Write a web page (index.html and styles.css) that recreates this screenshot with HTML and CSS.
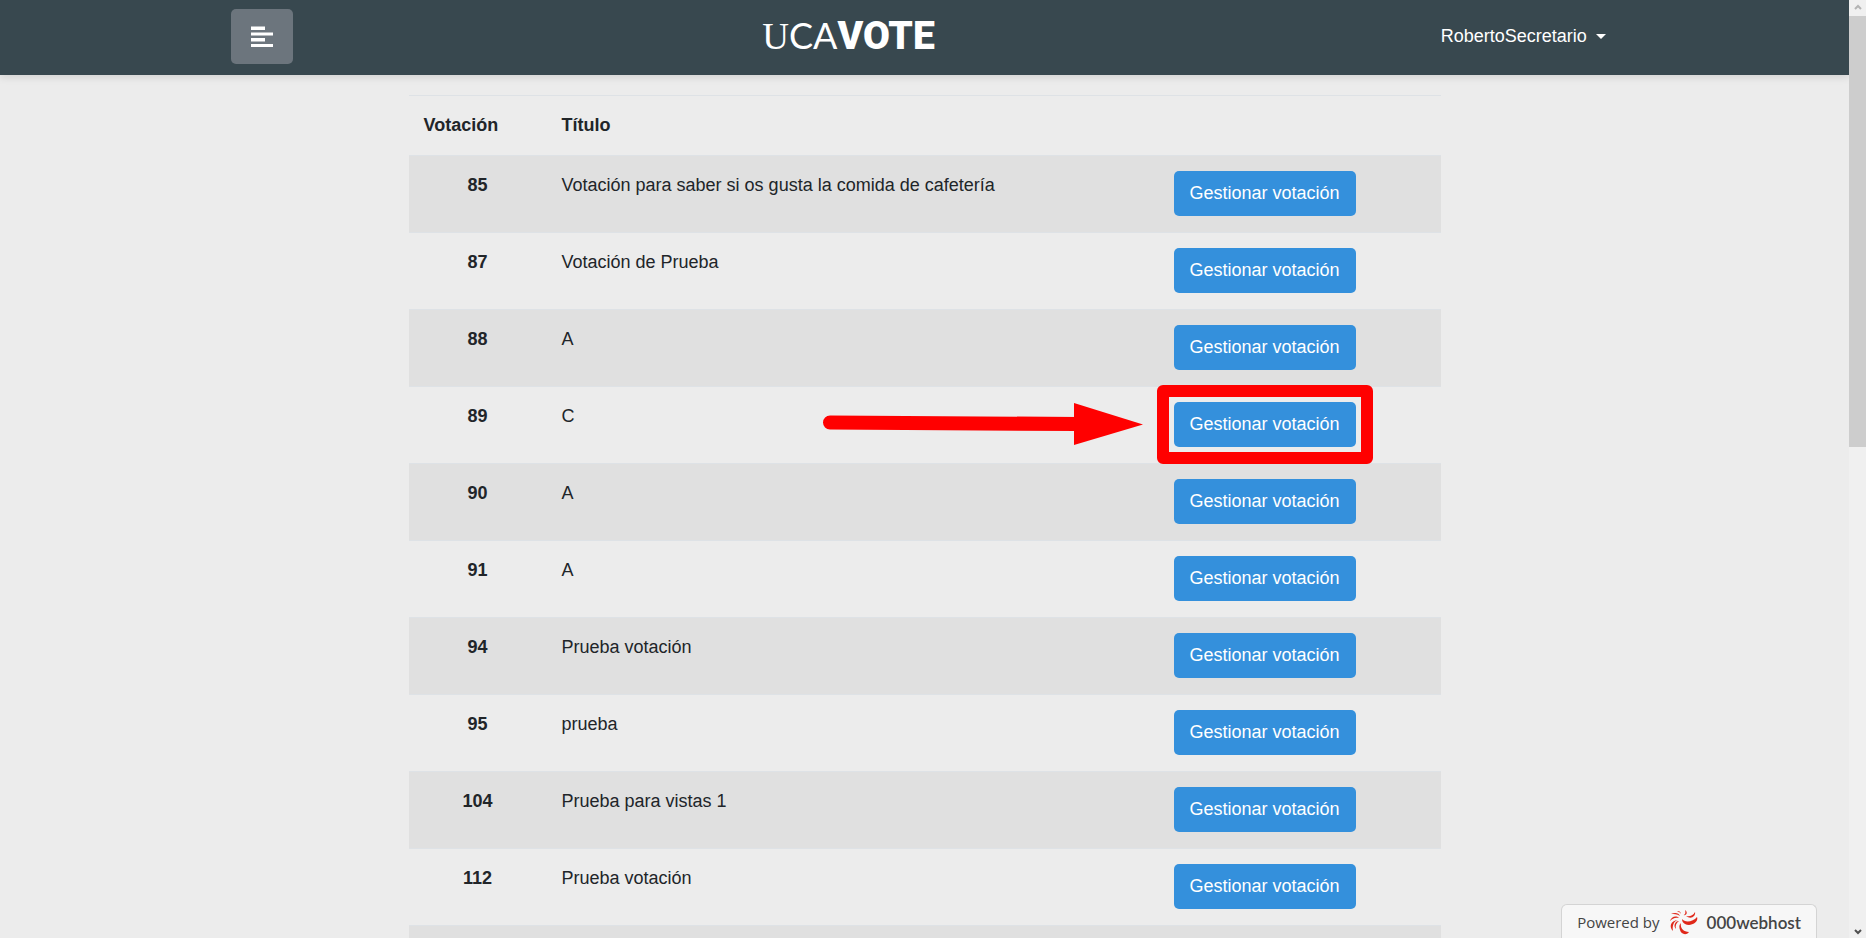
FILE: index.html
```
<!DOCTYPE html>
<html lang="es">
<head>
<meta charset="utf-8">
<title>UCAVOTE</title>
<link rel="stylesheet" href="styles.css">
</head>
<body>
<div class="page">
  <header class="navbar">
    <div class="navbar-inner">
      <button class="menu-button" type="button" aria-label="Menú">
        <svg width="22" height="22" viewBox="0 0 22 22" aria-hidden="true"><path fill="#fff" d="M0 0.500h14v3.500H0zM0 6.500h22v3H0zM0 12h14v3.500H0zM0 18h22v3H0z"/></svg>
      </button>
      <a class="brand" href="#"><span class="brand-u">U</span><span class="brand-ca">CA</span><span class="brand-vote">VOTE</span></a>
      <button class="user-menu" type="button">RobertoSecretario<span class="caret"></span></button>
    </div>
  </header>
  <main class="content">
    <table class="votes">
      <colgroup><col class="col-id"><col><col class="col-action"></colgroup>
      <thead>
        <tr><th>Votación</th><th>Título</th><th></th></tr>
      </thead>
      <tbody>
        <tr><th>85</th><td>Votación para saber si os gusta la comida de cafetería</td><td><button class="btn" type="button">Gestionar votación</button></td></tr>
        <tr><th>87</th><td>Votación de Prueba</td><td><button class="btn" type="button">Gestionar votación</button></td></tr>
        <tr><th>88</th><td>A</td><td><button class="btn" type="button">Gestionar votación</button></td></tr>
        <tr><th>89</th><td>C</td><td><div class="highlight"><button class="btn" type="button">Gestionar votación</button><svg class="arrow" width="322" height="42" viewBox="0 0 322 42" aria-hidden="true"><path d="M8 19.500L256 21" stroke="#f00" stroke-width="14" stroke-linecap="round"/><path d="M252 0L321 21.500L252 42z" fill="#f00"/></svg></div></td></tr>
        <tr><th>90</th><td>A</td><td><button class="btn" type="button">Gestionar votación</button></td></tr>
        <tr><th>91</th><td>A</td><td><button class="btn" type="button">Gestionar votación</button></td></tr>
        <tr><th>94</th><td>Prueba votación</td><td><button class="btn" type="button">Gestionar votación</button></td></tr>
        <tr><th>95</th><td>prueba</td><td><button class="btn" type="button">Gestionar votación</button></td></tr>
        <tr><th>104</th><td>Prueba para vistas 1</td><td><button class="btn" type="button">Gestionar votación</button></td></tr>
        <tr><th>112</th><td>Prueba votación</td><td><button class="btn" type="button">Gestionar votación</button></td></tr>
        <tr><th></th><td></td><td></td></tr>
      </tbody>
    </table>
  </main>
  <a class="host-badge" href="#">
    <span class="host-by">Powered by</span>
    <svg width="29" height="25" viewBox="0 0 29 25" aria-hidden="true" fill="#e0281a">
      <path d="M12 13C11 18 14 22 20 22C17 26 12 24 11 20C10 17 10 15 12 13z"/>
      <path d="M13 9C16 13 24 12 28 7C30 12 22 17 16 14C14 13 13 11 13 9z"/>
      <path d="M17 6C20 7 24 6 26 2C27 6 22 10 17 6z"/>
      <path d="M14 5C16 5 17 3 16 0C19 2 18 6 14 5z"/>
      <path d="M12 4C11 2 10 2 8 2C10 0 12 2 12 4z"/>
      <path d="M11 6C8 4 5 4 2 4C6 2 10 3 11 6z"/>
      <path d="M10 8C6 7 3 9 1 11C2 7 7 5 10 8z"/>
      <path d="M9 10C5 11 3 15 4 21C0 17 1 11 9 10z"/>
      <path d="M10 11C7 13 6 16 7 19C4 16 6 11 10 11z"/>
    </svg>
    <span class="host-name">000webhost</span>
  </a>
</div>
<div class="scrollbar" aria-hidden="true">
  <svg width="17" height="16" viewBox="0 0 17 16"><path d="M6 9L9 6L12 9" fill="none" stroke="#b4b4b4" stroke-width="2"/></svg>
  <div class="thumb"></div>
  <svg class="down" width="17" height="16" viewBox="0 0 17 16"><path d="M6 8L9 11L12 8" fill="none" stroke="#505050" stroke-width="2"/></svg>
</div>
</body>
</html>
```
FILE: styles.css
```
* { box-sizing: border-box; }
body {
  margin: 0;
  height: 100vh;
  display: flex;
  overflow: hidden;
  background: #ececec;
  color: #212529;
  font: 18px/29px "Liberation Sans", Arial, sans-serif;
}
button { font: inherit; border: 0; cursor: pointer; }
a { color: inherit; text-decoration: none; }
.page { position: relative; flex: 1; min-width: 0; overflow: hidden; }
.navbar {
  position: relative;
  height: 75px;
  background: #38484f;
  box-shadow: 0 2px 8px rgba(0, 0, 0, .12);
}
.navbar-inner {
  width: 75%;
  margin: 0 auto;
  padding-top: 9px;
  display: grid;
  grid-template-columns: 1fr auto 1fr;
  align-items: start;
}
.menu-button {
  width: 62px;
  height: 55px;
  padding: 0;
  display: flex;
  align-items: center;
  justify-content: center;
  border-radius: 5px;
  background: #6c757d;
}
.brand { display: flex; align-items: baseline; margin-right: 152px; color: #fff; line-height: 52px; }
.brand-u { font-family: "Liberation Serif", serif; font-size: 37px; }
.brand-ca { font-family: Lato, sans-serif; font-size: 36px; }
.brand-vote { font-family: Roboto, sans-serif; font-weight: 900; font-size: 39px; }
.user-menu {
  justify-self: end;
  margin-right: 12px;
  padding: 13px 0 0;
  display: flex;
  align-items: center;
  gap: 9px;
  background: none;
  color: #fff;
}
.caret { border: 5px solid transparent; border-top-color: #fff; border-bottom: 0; }
.content { width: 1032px; max-width: 100%; margin: 20px auto 0; }
.votes { width: 100%; table-layout: fixed; border-spacing: 0; }
.col-id { width: 138px; }
.col-action { width: 282px; }
.votes th, .votes td {
  height: 77px;
  padding: 15px 15px 16px;
  border-top: 1px solid #dee2e6;
  vertical-align: top;
  text-align: left;
}
.votes thead th { height: 60px; padding: 15px; }
.votes tbody th { text-align: center; }
.votes tbody tr:nth-child(odd) { background: #e0e0e0; }
.btn {
  display: block;
  padding: 8px 16px;
  border-radius: 5px;
  background: #3490dc;
  color: #fff;
}
.highlight { position: relative; width: max-content; }
.highlight::after {
  content: "";
  position: absolute;
  inset: -17px;
  border: 12px solid #f00;
  border-radius: 6px;
}
.arrow { position: absolute; top: 1px; right: calc(100% + 30px); }
.host-badge {
  position: absolute;
  right: 32px;
  bottom: 0;
  height: 34px;
  padding: 2px 15px 0;
  display: flex;
  align-items: center;
  gap: 9px;
  border: 1px solid #d4d4d4;
  border-bottom: 0;
  border-radius: 6px 6px 0 0;
  background: #f7f7f7;
  color: #444;
  font-family: "Open Sans", sans-serif;
  font-size: 15px;
}
.host-name { font-family: Lato, sans-serif; font-size: 17px; font-weight: 600; }
.scrollbar { width: 17px; display: flex; flex-direction: column; background: #f0f0f0; }
.thumb { height: 46%; background: #cdcdcd; }
.down { margin-top: auto; }
```
